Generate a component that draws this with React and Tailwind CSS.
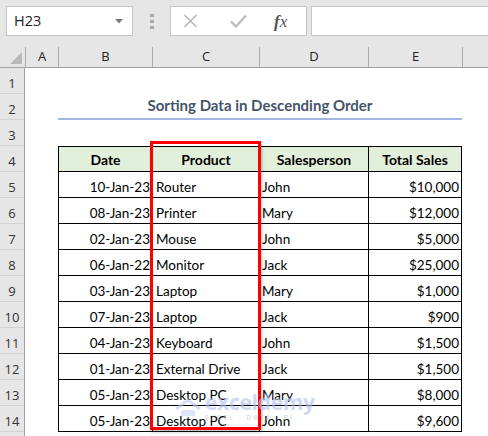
import React from "react";

const rows = [
  ["10-Jan-23", "Router", "John", "$10,000"],
  ["08-Jan-23", "Printer", "Mary", "$12,000"],
  ["02-Jan-23", "Mouse", "John", "$5,000"],
  ["06-Jan-22", "Monitor", "Jack", "$25,000"],
  ["03-Jan-23", "Laptop", "Mary", "$1,000"],
  ["07-Jan-23", "Laptop", "Jack", "$900"],
  ["04-Jan-23", "Keyboard", "John", "$1,500"],
  ["01-Jan-23", "External Drive", "Jack", "$1,500"],
  ["05-Jan-23", "Desktop PC", "Mary", "$8,000"],
  ["05-Jan-23", "Desktop PC", "John", "$9,600"],
];

const cols = [
  { label: "A", w: "w-[33px]" },
  { label: "B", w: "w-[94px]" },
  { label: "C", w: "w-[107px]" },
  { label: "D", w: "w-[109px]" },
  { label: "E", w: "w-[94px]" },
];

const uiFont = { fontFamily: '"Open Sans", "Noto Sans", sans-serif' };

const Toolbar = () => (
  <div className="flex h-[47px] items-start pt-[6px]">
    {/* name box */}
    <div className="ml-[6px] flex h-[30px] w-[127px] items-center justify-between border border-[#c6c6c6] bg-white pl-[7px] pr-[9px]">
      <span className="text-[14.5px] text-[#222]" style={uiFont}>H23</span>
      <svg width="8" height="5" viewBox="0 0 8 5">
        <path d="M0 0h8L4 4.5z" fill="#7a7a7a" />
      </svg>
    </div>
    {/* dots */}
    <div className="flex w-[37px] flex-col items-center gap-[3px] pt-[8px]">
      <span className="h-[3px] w-[4px] bg-[#a8a8a8]" />
      <span className="h-[3px] w-[4px] bg-[#a8a8a8]" />
      <span className="h-[3px] w-[4px] bg-[#a8a8a8]" />
    </div>
    {/* formula buttons */}
    <div className="flex h-[30px] w-[137px] items-center border border-[#c6c6c6] bg-white pl-[12px]">
      <svg width="15" height="14" viewBox="0 0 15 14">
        <path d="M1.5 1L13.5 13M13.5 1L1.5 13" stroke="#b8b8b8" strokeWidth="1.6" />
      </svg>
      <svg className="ml-[32px]" width="17" height="14" viewBox="0 0 17 14">
        <path d="M1 7.5L6 12.5L16 1.5" stroke="#bdbdbd" strokeWidth="2.4" fill="none" />
      </svg>
      <span
        className="ml-[27px] text-[17px] italic leading-none text-[#555]"
        style={{ fontFamily: '"Liberation Serif", serif' }}
      >
        <span className="font-bold">f</span>x
      </span>
    </div>
    {/* formula bar */}
    <div className="ml-[4px] h-[30px] flex-1 border border-r-0 border-[#c6c6c6] bg-white" />
  </div>
);

const ColumnHeader = () => (
  <div className="flex h-[21px] border-b border-[#a0a0a0]" style={uiFont}>
    <div className="flex w-[25px] items-end justify-end pb-[3px] pr-[3px]">
      <svg width="12" height="12" viewBox="0 0 12 12">
        <path d="M12 0V12H0z" fill="#b9b9b9" />
      </svg>
    </div>
    {cols.map((c) => (
      <div
        key={c.label}
        className={`${c.w} flex items-center justify-center border-l border-[#ababab] text-[13px] text-[#222]`}
      >
        {c.label}
      </div>
    ))}
    <div className="flex-1 border-l border-[#ababab]" />
  </div>
);

const RowHeader = () => (
  <div className="w-[25px] shrink-0 border-r border-[#a0a0a0]" style={uiFont}>
    {Array.from({ length: 15 }, (_, i) => (
      <div
        key={i}
        className="flex h-[26px] items-end justify-center border-b border-[#d2d2d2] text-[13px] leading-[19px] text-[#333]"
      >
        {i + 1}
      </div>
    ))}
  </div>
);

const cell = "flex h-full items-end leading-[20px] border-r border-black";

const Sheet = () => (
  <div className="flex-1 bg-white" style={{ fontFamily: "Lato, sans-serif" }}>
    <div className="h-[26px]" />
    {/* title row */}
    <div className="flex h-[26px] pl-[33px]">
      <div className="flex w-[404px] items-end justify-center border-b-2 border-[#a2b8e2] pb-[3px] text-[15px] font-bold leading-[20px] text-[#44546a]">
        Sorting Data in Descending Order
      </div>
    </div>
    <div className="h-[26px]" />
    {/* table header */}
    <div className="flex h-[26px] pl-[33px]">
      <div className="flex w-[404px] border border-black bg-[#e2efda] text-[14px] font-bold text-black">
        <div className={`${cell} w-[94px] justify-center pb-[1px]`}>Date</div>
        <div className={`${cell} w-[107px] justify-center pb-[1px]`}>Product</div>
        <div className={`${cell} w-[109px] justify-center pb-[1px]`}>Salesperson</div>
        <div className="flex h-full flex-1 items-end justify-center pb-[1px] leading-[20px]">Total Sales</div>
      </div>
    </div>
    {rows.map((r, i) => (
      <div key={i} className="flex h-[26px] pl-[33px]">
        <div className="flex w-[404px] border-x border-b border-black text-[13.5px] text-black">
          <div className={`${cell} w-[94px] justify-end pr-[2px]`}>{r[0]}</div>
          <div className={`${cell} w-[107px] pl-[3px]`}>{r[1]}</div>
          <div className={`${cell} w-[109px] pl-[2px]`}>{r[2]}</div>
          <div className="flex h-full flex-1 items-end justify-end pr-[2px] leading-[20px]">{r[3]}</div>
        </div>
      </div>
    ))}
  </div>
);

export default function App() {
  return (
    <div className="relative h-[436px] w-[488px] overflow-hidden bg-[#e6e6e6]">
      <Toolbar />
      <ColumnHeader />
      <div className="flex">
        <RowHeader />
        <Sheet />
      </div>

      {/* highlight box around Product column */}
      <div className="absolute left-[150px] top-[141px] h-[289px] w-[111px] border-[3px] border-[#ff0000] shadow-[1px_2px_3px_rgba(0,0,0,0.25)]" />

      {/* watermark */}
      <div className="pointer-events-none absolute left-[174px] top-[392px] flex items-center gap-[3px] opacity-60">
        <svg width="28" height="20" viewBox="0 0 28 20">
          <path d="M2 12L14 3L26 12" stroke="#b8c9ef" strokeWidth="3" fill="none" />
          <path d="M7 13h14v6H7z" fill="#c8d5f3" />
        </svg>
        <div className="flex flex-col leading-none">
          <span
            className="text-[21px] font-bold tracking-[-0.3px] text-[#aebff0]"
            style={{ fontFamily: '"Open Sans", sans-serif' }}
          >
            exceldemy
          </span>
          <span
            className="mt-[1px] text-[7px] tracking-[2px] text-[#b4b4b4]"
            style={{ fontFamily: '"Open Sans", sans-serif' }}
          >
            EXCEL · DATA · BI
          </span>
        </div>
      </div>
    </div>
  );
}
